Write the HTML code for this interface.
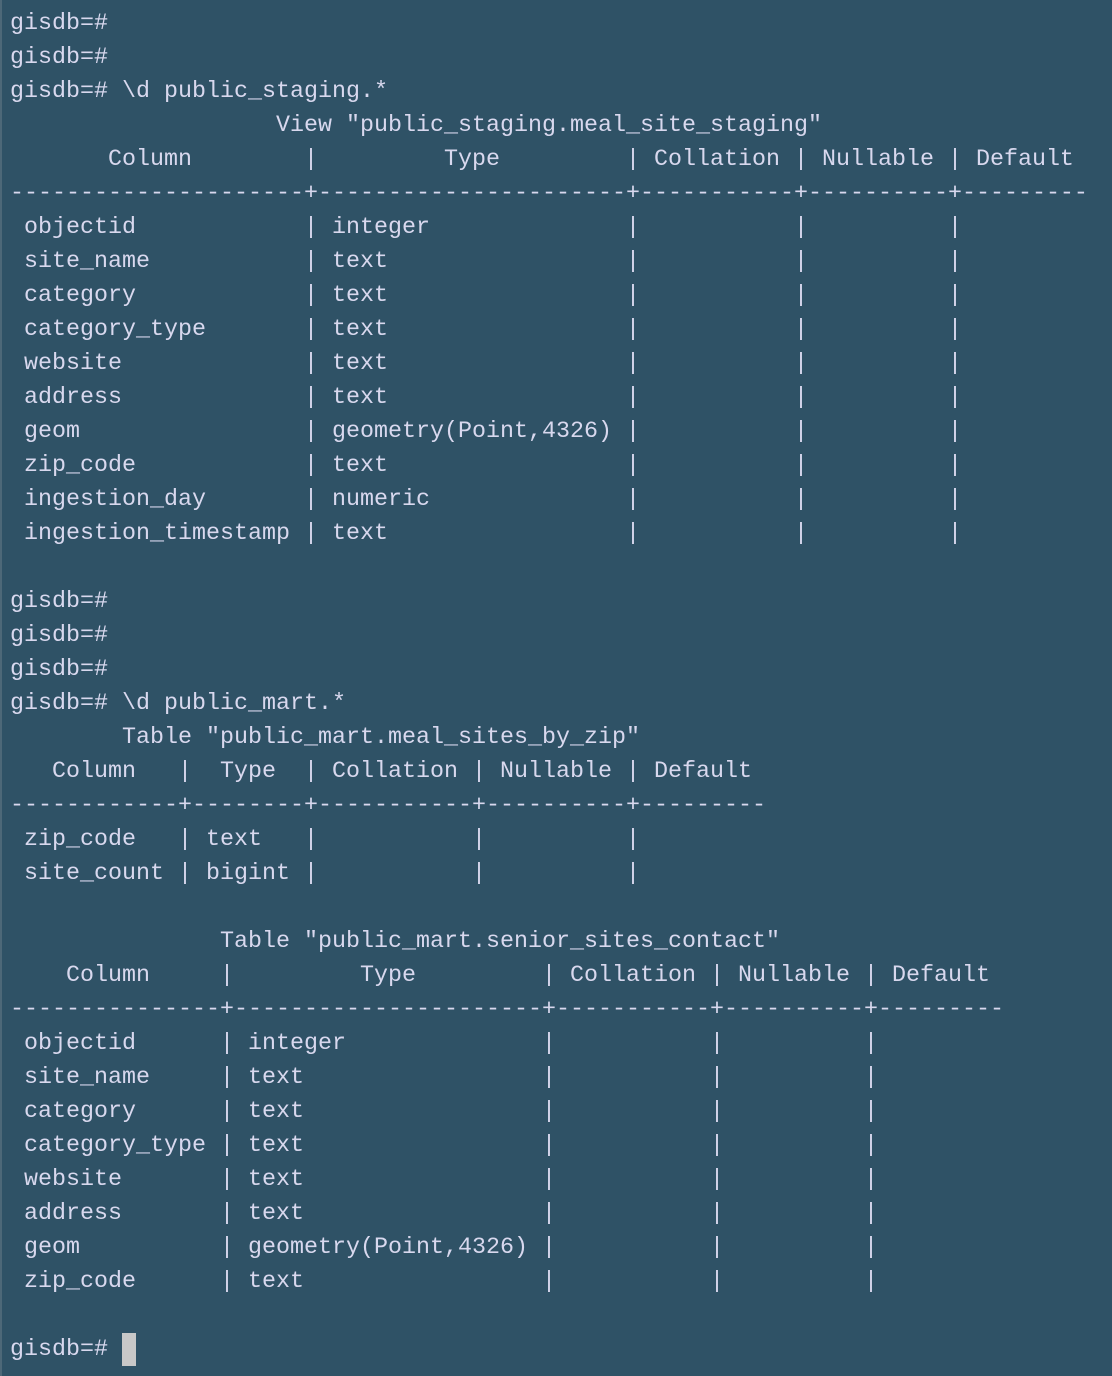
<!DOCTYPE html>
<html><head><meta charset="utf-8"><style>
html,body{margin:0;padding:0;}
body{width:1112px;height:1376px;background:#2f5266;overflow:hidden;position:relative;}
.bl{position:absolute;left:0;top:0;width:2px;height:1376px;background:#4d6878;}
pre{position:absolute;left:10px;top:7px;margin:0;font-family:"Liberation Mono",monospace;font-size:23.33px;line-height:34px;color:#d8d8ee;white-space:pre;}
.cur{display:inline-block;width:14px;height:33px;background:#c8c8c8;vertical-align:top;}
</style></head><body><div class="bl"></div><pre>gisdb=#
gisdb=#
gisdb=# \d public_staging.*
                   View "public_staging.meal_site_staging"
       Column        |         Type         | Collation | Nullable | Default
---------------------+----------------------+-----------+----------+---------
 objectid            | integer              |           |          |
 site_name           | text                 |           |          |
 category            | text                 |           |          |
 category_type       | text                 |           |          |
 website             | text                 |           |          |
 address             | text                 |           |          |
 geom                | geometry(Point,4326) |           |          |
 zip_code            | text                 |           |          |
 ingestion_day       | numeric              |           |          |
 ingestion_timestamp | text                 |           |          |

gisdb=#
gisdb=#
gisdb=#
gisdb=# \d public_mart.*
        Table "public_mart.meal_sites_by_zip"
   Column   |  Type  | Collation | Nullable | Default
------------+--------+-----------+----------+---------
 zip_code   | text   |           |          |
 site_count | bigint |           |          |

               Table "public_mart.senior_sites_contact"
    Column     |         Type         | Collation | Nullable | Default
---------------+----------------------+-----------+----------+---------
 objectid      | integer              |           |          |
 site_name     | text                 |           |          |
 category      | text                 |           |          |
 category_type | text                 |           |          |
 website       | text                 |           |          |
 address       | text                 |           |          |
 geom          | geometry(Point,4326) |           |          |
 zip_code      | text                 |           |          |

gisdb=# <span class="cur"></span></pre></body></html>
